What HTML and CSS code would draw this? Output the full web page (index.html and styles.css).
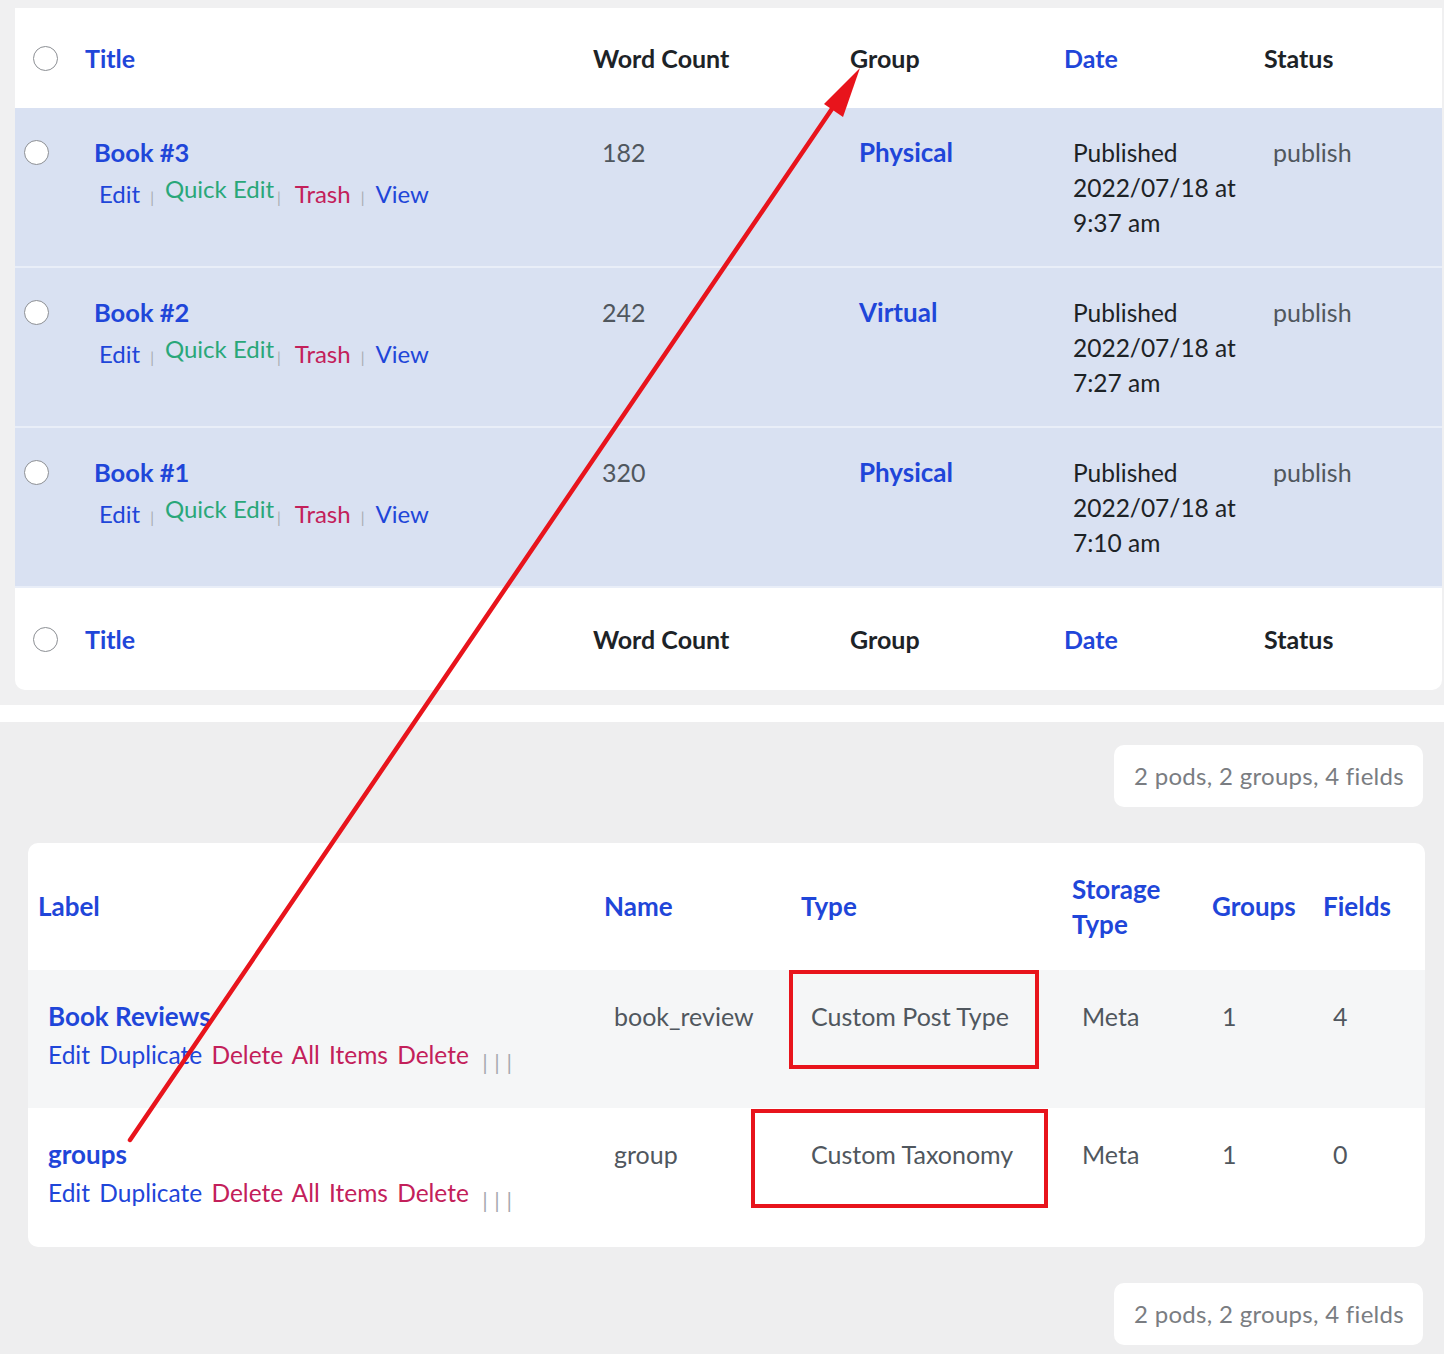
FILE: index.html
```html
<!DOCTYPE html>
<html lang="en">
<head>
    <meta charset="UTF-8">
    <meta name="viewport" content="width=device-width, initial-scale=1.0">
    <title>Books and Pods</title>
    <link rel="stylesheet" href="styles.css">
</head>
<body>
    <div class="shot shot-top">
        <div class="card posts">
            <div class="prow head">
                <div class="cb"><span class="radio"></span></div>
                <div class="cell link">Title</div>
                <div class="cell">Word Count</div>
                <div class="cell">Group</div>
                <div class="cell link">Date</div>
                <div class="cell">Status</div>
            </div>

            <div class="prow item">
                <div class="cb"><span class="radio"></span></div>
                <div class="cell">
                    <a class="post-title">Book #3</a>
                    <div class="row-actions">
                        <a class="act blue">Edit</a><span class="sep">|</span><a class="act green">Quick Edit</a><span class="sep tight">|</span><a class="act red">Trash</a><span class="sep">|</span><a class="act blue">View</a>
                    </div>
                </div>
                <div class="cell muted">182</div>
                <div class="cell"><a class="term">Physical</a></div>
                <div class="cell date">Published<br>2022/07/18 at<br>9:37 am</div>
                <div class="cell muted">publish</div>
            </div>

            <div class="prow item">
                <div class="cb"><span class="radio"></span></div>
                <div class="cell">
                    <a class="post-title">Book #2</a>
                    <div class="row-actions">
                        <a class="act blue">Edit</a><span class="sep">|</span><a class="act green">Quick Edit</a><span class="sep tight">|</span><a class="act red">Trash</a><span class="sep">|</span><a class="act blue">View</a>
                    </div>
                </div>
                <div class="cell muted">242</div>
                <div class="cell"><a class="term">Virtual</a></div>
                <div class="cell date">Published<br>2022/07/18 at<br>7:27 am</div>
                <div class="cell muted">publish</div>
            </div>

            <div class="prow item">
                <div class="cb"><span class="radio"></span></div>
                <div class="cell">
                    <a class="post-title">Book #1</a>
                    <div class="row-actions">
                        <a class="act blue">Edit</a><span class="sep">|</span><a class="act green">Quick Edit</a><span class="sep tight">|</span><a class="act red">Trash</a><span class="sep">|</span><a class="act blue">View</a>
                    </div>
                </div>
                <div class="cell muted">320</div>
                <div class="cell"><a class="term">Physical</a></div>
                <div class="cell date">Published<br>2022/07/18 at<br>7:10 am</div>
                <div class="cell muted">publish</div>
            </div>

            <div class="prow head foot">
                <div class="cb"><span class="radio"></span></div>
                <div class="cell link">Title</div>
                <div class="cell">Word Count</div>
                <div class="cell">Group</div>
                <div class="cell link">Date</div>
                <div class="cell">Status</div>
            </div>
        </div>
    </div>

    <div class="strip"></div>

    <div class="shot shot-bottom">
        <div class="summary">2 pods, 2 groups, 4 fields</div>

        <div class="card pods">
            <div class="podrow head">
                <div class="cell">Label</div>
                <div class="cell">Name</div>
                <div class="cell">Type</div>
                <div class="cell">Storage<br>Type</div>
                <div class="cell">Groups</div>
                <div class="cell">Fields</div>
            </div>

            <div class="podrow item alt">
                <div class="cell">
                    <a class="pod-title">Book Reviews</a>
                    <div class="pod-actions">
                        <a class="blue">Edit</a> <a class="blue">Duplicate</a> <a class="red">Delete All Items</a> <a class="red">Delete</a> <span class="bars">| | |</span>
                    </div>
                </div>
                <div class="cell muted">book_review</div>
                <div class="cell muted type-cell">Custom Post Type<span class="mark mark-cpt"></span></div>
                <div class="cell muted">Meta</div>
                <div class="cell muted">1</div>
                <div class="cell muted">4</div>
            </div>

            <div class="podrow item">
                <div class="cell">
                    <a class="pod-title">groups</a>
                    <div class="pod-actions">
                        <a class="blue">Edit</a> <a class="blue">Duplicate</a> <a class="red">Delete All Items</a> <a class="red">Delete</a> <span class="bars">| | |</span>
                    </div>
                </div>
                <div class="cell muted">group</div>
                <div class="cell muted type-cell">Custom Taxonomy<span class="mark mark-tax"></span></div>
                <div class="cell muted">Meta</div>
                <div class="cell muted">1</div>
                <div class="cell muted">0</div>
            </div>
        </div>

        <div class="summary">2 pods, 2 groups, 4 fields</div>
    </div>

    <!-- annotation arrow drawn over both screenshots -->
    <svg class="arrow" width="1444" height="1354" viewBox="0 0 1444 1354">
        <line x1="130" y1="1140" x2="838" y2="100" stroke="#e8141c" stroke-width="4.5" stroke-linecap="round"/>
        <polygon points="860,68 824,104 843,117" fill="#e8141c"/>
    </svg>
</body>
</html>
```

FILE: styles.css
```css
body {
    margin: 0;
    font-family: "Lato", "Noto Sans", sans-serif;
    background-color: #f0f0f1;
    position: relative;
    width: 1444px;
    overflow: hidden;
}
a {
    text-decoration: none;
}
.card {
    background-color: white;
    border-radius: 8px;
}

/* top screenshot: post list */
.shot-top {
    padding: 8px 2px 15px 15px;
    background-color: #f0f0f1;
}
.posts {
    overflow: hidden;
    border-radius: 0 0 10px 10px;
}
.prow {
    display: grid;
    grid-template-columns: 70px 508px 257px 214px 200px 1fr;
    font-size: 25px;
    color: #1d2327;
}
.prow.head {
    height: 100px;
    align-items: center;
    font-weight: bold;
}
.prow.foot {
    height: 102px;
}
.prow.head .cb {
    padding-left: 18px;
}
.prow.head .cell.link {
    color: #1f46d9;
}
.prow.item {
    background-color: #d9e1f2;
    border-bottom: 2px solid #e9eef8;
    padding-top: 27px;
    box-sizing: border-box;
    height: 160px;
}
.prow.item .cb {
    padding-left: 9px;
    padding-top: 5px;
}
.prow.item .cell {
    padding-left: 9px;
    line-height: 35px;
}
.radio {
    display: block;
    width: 23px;
    height: 23px;
    border: 1px solid #8c8f94;
    border-radius: 50%;
    background-color: white;
}
.post-title {
    font-weight: bold;
    color: #1f46d9;
    font-size: 25.5px;
}
.row-actions {
    margin-top: 6px;
    margin-left: 5px;
    font-size: 24px;
}
.act.blue { color: #1f46d9; }
.act.green {
    color: #2aa779;
    position: relative;
    top: -5px;
}
.act.red { color: #c3205a; }
.sep {
    color: #a7aab0;
    font-size: 15px;
    margin: 0 11px 0 10px;
}
.sep.tight {
    margin-left: 3px;
    margin-right: 14px;
}
.muted {
    color: #50575e;
}
.term {
    font-weight: bold;
    color: #1f46d9;
    font-size: 26px;
}
.date {
    color: #1d2327;
    font-size: 24.5px;
}

/* gap between the two screenshots */
.strip {
    height: 17px;
    background-color: white;
}

/* bottom screenshot: pods admin */
.shot-bottom {
    background-color: #eeeeef;
    padding: 23px 19px 9px 28px;
    display: flex;
    flex-direction: column;
    gap: 36px;
}
.summary {
    align-self: flex-end;
    margin-right: 2px;
    background-color: white;
    border-radius: 10px;
    height: 62px;
    line-height: 62px;
    padding: 0 19px 0 20px;
    font-size: 24px;
    color: #7a7d82;
    letter-spacing: 0.3px;
}
.pods {
    padding-left: 10px;
    overflow: hidden;
    border-radius: 10px;
}
.podrow {
    display: grid;
    grid-template-columns: 566px 197px 271px 140px 111px 1fr;
    font-size: 25px;
}
.podrow.head {
    height: 127px;
    align-items: center;
    font-weight: bold;
    color: #1f46d9;
    font-size: 26px;
    line-height: 35px;
}
.podrow.item {
    height: 139px;
    padding-top: 28px;
    box-sizing: border-box;
    margin-left: -10px;
    padding-left: 10px;
}
.podrow.alt {
    background-color: #f5f6f7;
    height: 138px;
}
.podrow.item .cell {
    padding-left: 10px;
    line-height: 36px;
}
.pod-title {
    font-weight: bold;
    color: #1f46d9;
    font-size: 26px;
}
.pod-actions {
    margin-top: 3px;
    font-size: 24.5px;
    word-spacing: 3px;
}
.pod-actions .blue { color: #1f46d9; }
.pod-actions .red { color: #c3205a; }
.bars {
    color: #a7aab0;
    font-size: 22px;
    position: relative;
    top: 6px;
    margin-left: 4px;
    word-spacing: 1px;
}
.type-cell {
    position: relative;
}

/* red annotation boxes */
.mark {
    position: absolute;
    border: 4px solid #e8141c;
    box-sizing: border-box;
}
.mark-cpt {
    left: -12px;
    top: -28px;
    width: 250px;
    height: 99px;
}
.mark-tax {
    left: -50px;
    top: -27px;
    width: 297px;
    height: 99px;
}
.arrow {
    position: absolute;
    left: 0;
    top: 0;
    pointer-events: none;
}
```
